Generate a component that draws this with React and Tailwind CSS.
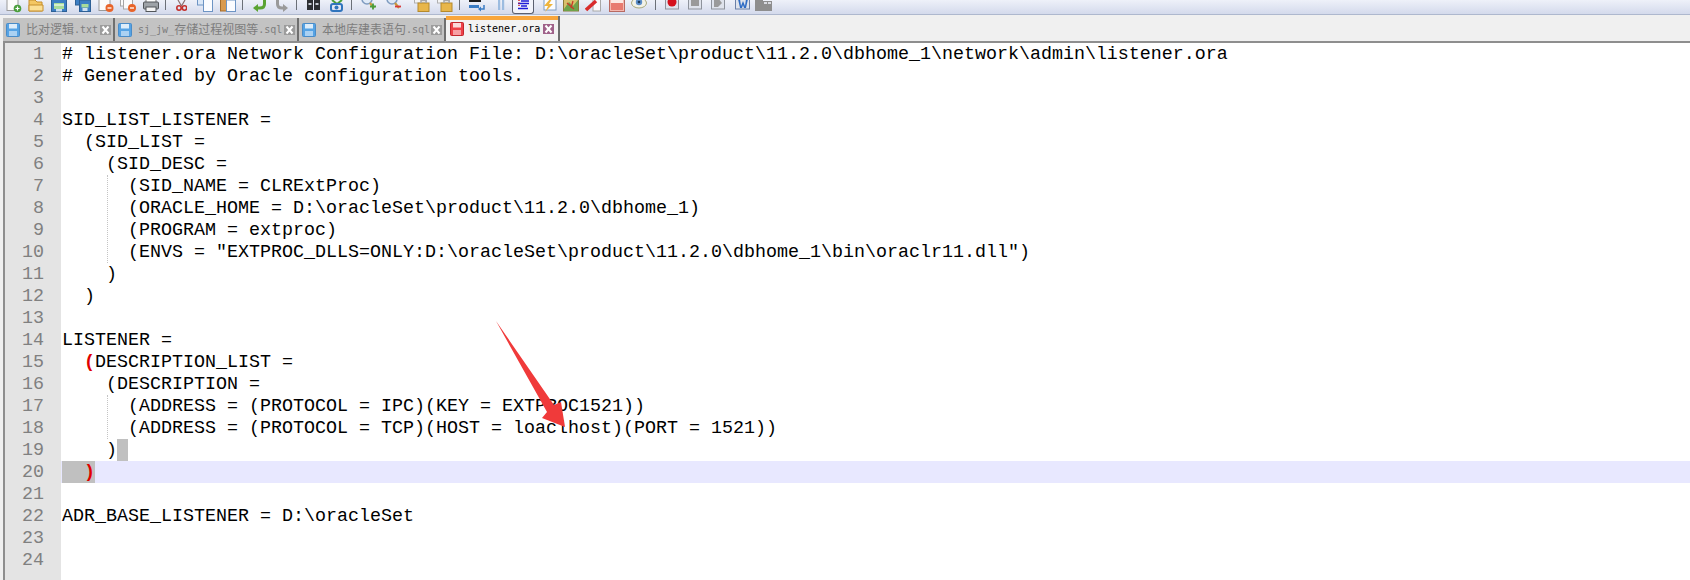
const lines = [
  '# listener.ora Network Configuration File: D:\\oracleSet\\product\\11.2.0\\dbhome_1\\network\\admin\\listener.ora',
  '# Generated by Oracle configuration tools.',
  '',
  'SID_LIST_LISTENER =',
  '  (SID_LIST =',
  '    (SID_DESC =',
  '      (SID_NAME = CLRExtProc)',
  '      (ORACLE_HOME = D:\\oracleSet\\product\\11.2.0\\dbhome_1)',
  '      (PROGRAM = extproc)',
  '      (ENVS = "EXTPROC_DLLS=ONLY:D:\\oracleSet\\product\\11.2.0\\dbhome_1\\bin\\oraclr11.dll")',
  '    )',
  '  )',
  '',
  'LISTENER =',
  null,
  '    (DESCRIPTION =',
  '      (ADDRESS = (PROTOCOL = IPC)(KEY = EXTPROC1521))',
  '      (ADDRESS = (PROTOCOL = TCP)(HOST = loaclhost)(PORT = 1521))',
  null,
  null,
  '',
  'ADR_BASE_LISTENER = D:\\oracleSet',
  '',
  '',
]

// toolbar icons are cut off by the top of the picture, so the viewBox starts at y=3
function Ico({ children, w = 16 }) {
  return (
    <svg width={w} height="13" viewBox={`0 3 ${w} 13`} className="shrink-0">
      {children}
    </svg>
  )
}

function Sep({ className = '' }) {
  return <div className={`h-[10px] w-px shrink-0 self-start bg-[#6b7078] ${className}`} />
}

function Doc({ x = 1 }) {
  return <rect x={x} y="0" width="11" height="13.5" fill="#fbfbfb" stroke="#9a9a9a" />
}

function Toolbar() {
  return (
    <div className="flex h-[15px] items-start border-b border-[#aeb8ce] bg-[#dfe4f2] bg-gradient-to-b from-[#eef1f9] to-[#d4daec] pl-[6px]">
      <div className="flex w-[22px] shrink-0">
        <Ico>
          <Doc />
          <circle cx="11.5" cy="11.5" r="3.8" fill="#4a9e3c" />
          <path d="M9.5 11.5h4M11.5 9.5v4" stroke="#fff" strokeWidth="1.2" />
        </Ico>
      </div>
      <div className="flex w-[23px] shrink-0">
        <Ico>
          <path d="M1 3h6l2 2h5v9H1z" fill="#f4c763" stroke="#c68f2e" />
          <path d="M1 8h14v6H1z" fill="#fbdf95" stroke="#c68f2e" />
        </Ico>
      </div>
      <div className="flex w-[24px] shrink-0">
        <Ico>
          <rect x="0.5" y="0" width="15" height="14.5" fill="#3c7fc4" stroke="#2d6096" />
          <rect x="3" y="6" width="10" height="6" fill="#a8dc9a" />
          <rect x="3" y="7.5" width="10" height="1" fill="#fff" />
          <rect x="5" y="12" width="6" height="2.5" fill="#cfe0f2" />
        </Ico>
      </div>
      <div className="flex w-[23px] shrink-0">
        <Ico>
          <rect x="0.5" y="0" width="10" height="8" fill="#3c7fc4" stroke="#2d6096" />
          <rect x="4.5" y="3" width="11" height="11.5" fill="#3c7fc4" stroke="#2d6096" />
          <rect x="6.5" y="7" width="7" height="3.5" fill="#a8dc9a" />
          <rect x="7.5" y="11" width="5" height="3" fill="#cfe0f2" />
        </Ico>
      </div>
      <div className="flex w-[22px] shrink-0">
        <Ico>
          <Doc />
          <circle cx="11.5" cy="11" r="4" fill="#e8642a" />
          <path d="M9.5 11h4" stroke="#fff" strokeWidth="1.3" />
        </Ico>
      </div>
      <div className="flex w-[23px] shrink-0">
        <Ico w={17}>
          <rect x="0.5" y="0" width="6" height="9" fill="#fbfbfb" stroke="#a6a6a6" />
          <rect x="3.5" y="2" width="9" height="10" fill="#fbfbfb" stroke="#a6a6a6" />
          <circle cx="12" cy="11" r="4" fill="#e8642a" />
          <path d="M10 11h4" stroke="#fff" strokeWidth="1.3" />
        </Ico>
      </div>
      <div className="flex w-[22px] shrink-0">
        <Ico>
          <rect x="3" y="0" width="10" height="6" fill="#fff" stroke="#777" />
          <rect x="0.5" y="5" width="15" height="7" rx="1" fill="#9ea3a8" stroke="#52565a" />
          <rect x="3" y="10" width="10" height="4.5" fill="#f5f5f5" stroke="#52565a" />
        </Ico>
      </div>
      <Sep className="mr-[10px]" />
      <div className="flex w-[21px] shrink-0">
        <Ico w={11}>
          <path d="M2 3l3.5 6M9 3L5.5 9" stroke="#8a6f6f" strokeWidth="1.2" />
          <circle cx="3" cy="11" r="2.2" fill="none" stroke="#c4302c" strokeWidth="1.6" />
          <circle cx="8.5" cy="11" r="2.2" fill="none" stroke="#c4302c" strokeWidth="1.6" />
        </Ico>
      </div>
      <div className="flex w-[23px] shrink-0">
        <Ico>
          <rect x="0.5" y="0" width="8" height="8" fill="#dbe8f8" stroke="#6d94c4" />
          <rect x="6.5" y="2" width="9" height="12.5" fill="#fbfcff" stroke="#6d94c4" />
        </Ico>
      </div>
      <div className="flex w-[22px] shrink-0">
        <Ico>
          <rect x="0.5" y="0" width="9" height="14" fill="#d99a4e" stroke="#a56d2a" />
          <rect x="6.5" y="3" width="9" height="11.5" fill="#fbfcff" stroke="#6d94c4" />
        </Ico>
      </div>
      <Sep className="mr-[9px]" />
      <div className="flex w-[23px] shrink-0">
        <Ico w={15}>
          <path d="M12.5 3v4c0 3-2 4-4.5 4H4" fill="none" stroke="#5aa332" strokeWidth="3" />
          <path d="M6 7l-5 4 5 4z" fill="#5aa332" />
        </Ico>
      </div>
      <div className="flex w-[21px] shrink-0">
        <Ico w={14}>
          <path d="M2.5 3v4c0 3 2 4 4.500 4h2" fill="none" stroke="#9a9a9a" strokeWidth="3" />
          <path d="M8 7l5 4-5 4z" fill="#9a9a9a" />
        </Ico>
      </div>
      <Sep className="mr-[9px]" />
      <div className="flex w-[22px] shrink-0">
        <Ico w={15}>
          <rect x="1" y="3" width="6" height="10" fill="#2d2f33" />
          <rect x="8" y="3" width="6" height="10" fill="#2d2f33" />
          <rect x="2.5" y="6" width="3" height="2" fill="#c9ced6" />
          <rect x="9.5" y="6" width="3" height="2" fill="#c9ced6" />
        </Ico>
      </div>
      <div className="flex w-[23px] shrink-0">
        <Ico w={17}>
          <path d="M4 3l5 4 5-4" fill="none" stroke="#4a9e3c" strokeWidth="2" />
          <rect x="3" y="7" width="11" height="7" rx="2" fill="none" stroke="#2f74bd" strokeWidth="2" />
          <circle cx="8.5" cy="10.5" r="2" fill="#2f74bd" />
        </Ico>
      </div>
      <Sep className="mr-[9px]" />
      <div className="flex w-[25px] shrink-0">
        <Ico>
          <circle cx="6" cy="2" r="5" fill="#dfeaf7" stroke="#7f9cc0" strokeWidth="1.5" />
          <path d="M9 6l4 5" stroke="#c89a3a" strokeWidth="2.2" />
          <path d="M9 9.5h6M12 6.5v6" stroke="#4a9e3c" strokeWidth="1.8" />
        </Ico>
      </div>
      <div className="flex w-[28px] shrink-0">
        <Ico>
          <circle cx="6" cy="2" r="5" fill="#dfeaf7" stroke="#7f9cc0" strokeWidth="1.5" />
          <path d="M9 6l4 5" stroke="#c89a3a" strokeWidth="2.2" />
          <path d="M9 9.5h6" stroke="#d83a3a" strokeWidth="1.8" />
        </Ico>
      </div>
      <div className="flex w-[23px] shrink-0">
        <Ico w={17}>
          <rect x="0.5" y="0" width="12" height="6" fill="#f4f4f4" stroke="#b0b0b0" />
          <rect x="4" y="6" width="11" height="8.5" fill="#e8b64a" stroke="#b58a2c" />
          <path d="M7 6V3.5h5V6" fill="none" stroke="#a8a8a8" strokeWidth="1.5" />
        </Ico>
      </div>
      <div className="flex w-[22px] shrink-0">
        <Ico w={17}>
          <rect x="0.5" y="0" width="12" height="6" fill="#f4f4f4" stroke="#b0b0b0" />
          <rect x="4" y="6" width="11" height="8.5" fill="#e8b64a" stroke="#b58a2c" />
          <path d="M7 6V3.5h5V6" fill="none" stroke="#a8a8a8" strokeWidth="1.5" />
        </Ico>
      </div>
      <Sep className="mr-[9px]" />
      <div className="flex w-[28px] shrink-0">
        <Ico>
          <rect x="0" y="3" width="12" height="2" fill="#1c1c1c" />
          <rect x="0" y="8" width="10" height="3" fill="#3a7cc4" />
          <path d="M15 8v4h-5" fill="none" stroke="#3a7cc4" strokeWidth="1.5" />
          <path d="M12 9.5v5l-3-2.5z" fill="#3a7cc4" />
        </Ico>
      </div>
      <div className="flex w-[15px] shrink-0">
        <Ico w={8}>
          <rect x="1" y="3" width="2.2" height="10" fill="#9cbce0" />
          <rect x="5" y="3" width="2.2" height="10" fill="#9cbce0" />
        </Ico>
      </div>
      <div className="flex h-[14px] w-[22px] shrink-0 justify-center rounded-b-[3px] border-x border-b border-[#5b6070] bg-[#f2f4fb]">
        <Ico w={16}>
          <path d="M6 4h8M3 6.5h11M6 9h6M3 11.5h10" stroke="#1c1cd8" strokeWidth="1.3" />
          <path d="M4 3v7" stroke="#d82020" strokeWidth="1.5" strokeDasharray="1 1.5" />
        </Ico>
      </div>
      <div className="ml-[7px] flex w-[22px] shrink-0">
        <Ico>
          <rect x="3" y="2" width="12" height="11" fill="#fbfcff" stroke="#7f9cc0" />
          <path d="M9 2L3 9h4l-3 6 8-8H8l3-5z" fill="#efb53c" />
        </Ico>
      </div>
      <div className="flex w-[22px] shrink-0">
        <Ico>
          <rect x="0.5" y="1" width="15" height="13" fill="#d8c06a" stroke="#8a7a3a" />
          <path d="M1 12l5-7 4 4 5-6v11H1z" fill="#6fa34a" />
          <path d="M4 6l7 6M10 4l-2 7" stroke="#c83a2a" strokeWidth="1.3" />
        </Ico>
      </div>
      <div className="flex w-[24px] shrink-0">
        <Ico>
          <rect x="8" y="2" width="7.5" height="12" fill="#fbfbfb" stroke="#a8a8a8" />
          <path d="M1 13L11 4" stroke="#d82c2c" strokeWidth="3.5" />
        </Ico>
      </div>
      <div className="flex w-[22px] shrink-0">
        <Ico>
          <rect x="0.5" y="0" width="15" height="14.5" fill="#f4b8b0" stroke="#b86a62" />
          <rect x="2" y="0" width="12" height="6" fill="#fbe8e4" />
          <rect x="2" y="6" width="12" height="7" fill="#e87a70" />
        </Ico>
      </div>
      <div className="flex w-[24px] shrink-0">
        <Ico>
          <ellipse cx="8" cy="6" rx="7.5" ry="5" fill="#f2f2e8" stroke="#a8a87a" />
          <circle cx="8" cy="5" r="3.2" fill="#5c8ec8" />
          <circle cx="8" cy="5" r="1.3" fill="#1e3a5a" />
        </Ico>
      </div>
      <Sep className="mr-[9px]" />
      <div className="flex w-[23px] shrink-0">
        <Ico w={14}>
          <rect x="0.5" y="0" width="13" height="12" fill="#dfe3ec" stroke="#8e939c" />
          <circle cx="7" cy="5" r="4.5" fill="#d4101c" />
        </Ico>
      </div>
      <div className="flex w-[23px] shrink-0">
        <Ico w={14}>
          <rect x="0.5" y="0" width="13" height="12" fill="#dfe3ec" stroke="#8e939c" />
          <rect x="3" y="2" width="8" height="7" fill="#9a9a9a" />
        </Ico>
      </div>
      <div className="flex w-[24px] shrink-0">
        <Ico w={14}>
          <rect x="0.5" y="0" width="13" height="12" fill="#dfe3ec" stroke="#8e939c" />
          <path d="M3 1h4l4 5-4 4H3z" fill="#9a9a9a" />
        </Ico>
      </div>
      <div className="flex w-[20px] shrink-0">
        <Ico w={15}>
          <rect x="0.5" y="0" width="14" height="12" fill="#dfe3ec" stroke="#6b80a8" />
          <path d="M3 2h2l1 7 2-5 2 5 1-7h2l-2 9H9L8 8l-1 3H5z" fill="#2f6cc4" />
        </Ico>
      </div>
      <Ico w={17}>
        <rect x="0" y="4" width="17" height="10" fill="#8e8e8e" />
        <rect x="0" y="3" width="8" height="5" fill="#8e8e8e" />
        <rect x="9" y="5" width="3" height="2" fill="#d8dae0" />
        <rect x="13" y="5" width="3" height="2" fill="#d8dae0" />
      </Ico>
    </div>
  )
}

function SaveIcon({ color = '#5aa7e6', edge = '#3a7cc4' }) {
  return (
    <svg width="14" height="14" viewBox="0 0 14 14" className="shrink-0">
      <rect x="0.5" y="0.5" width="13" height="13" rx="1" fill={color} stroke={edge} />
      <rect x="3" y="1" width="8" height="4.5" fill="#fff" opacity="0.8" />
      <rect x="3" y="8" width="8" height="5" fill="#fff" opacity="0.5" />
    </svg>
  )
}

function CloseBox({ bg }) {
  return (
    <svg width="11" height="10" viewBox="0 0 11 10" className={`shrink-0 ${bg}`}>
      <path d="M2.5 1.5l6 7M8.5 1.5l-6 7" stroke="#fff" strokeWidth="2" />
    </svg>
  )
}

function Tab({ cjk, name, ext, className }) {
  return (
    <div className={`flex h-[23px] items-center border-r-2 border-[#6f6f6f] bg-[#c3c3c3] pl-[3px] text-[#7d7d7d] ${className}`}>
      <SaveIcon color="#56a3e4" edge="#4a8cc8" />
      <div className="ml-[6px] flex flex-1 items-center">
        {name && <span className="text-[10px]">{name}</span>}
        <span className="text-[12px]">{cjk}</span>
        <span className="text-[10px]">{ext}</span>
      </div>
      <CloseBox bg="bg-[#9c9c9c]" />
      <div className="w-[2px]" />
    </div>
  )
}

function Row({ i, children }) {
  return (
    <div className={`h-[22px] whitespace-pre pl-[1px] leading-[24px] ${i === 19 ? 'bg-[#e8e8ff]' : ''}`}>
      {children}
    </div>
  )
}

function Guide({ top, rows }) {
  return (
    <div className={`absolute left-[46px] w-0 border-l border-dotted border-[#c4c4c4] ${top} ${rows}`} />
  )
}

export default function App() {
  return (
    <div className="relative h-[580px] w-[1690px] overflow-hidden bg-[#f0f0f0] font-['Liberation_Mono','Noto_Sans_CJK_SC',monospace]">
      <Toolbar />

      {/* Tabs */}
      <div className="flex h-[26px] items-end pl-[3px] font-['DejaVu_Sans_Mono','Noto_Sans_CJK_SC',monospace]">
        <Tab className="w-[112px]" cjk="比对逻辑" ext=".txt" />
        <Tab className="w-[184px]" name="sj_jw_" cjk="存储过程视图等" ext=".sql" />
        <Tab className="w-[147px]" cjk="本地库建表语句" ext=".sql" />
        <div className="flex h-[25px] w-[114px] flex-col border-r-2 border-[#6f6f6f] bg-[#f3f3f3]">
          <div className="h-[4px] bg-[#f9a63c]" />
          <div className="flex items-center pl-[4px] pt-[1px]">
            <SaveIcon color="#ee4148" edge="#c0282e" />
            <span className="ml-[4px] flex-1 text-[10px] text-black">listener.ora</span>
            <CloseBox bg="bg-[#a0628a]" />
            <div className="w-[4px]" />
          </div>
        </div>
      </div>

      {/* Editor */}
      <div className="ml-[3px] flex h-[539px] border-t-2 border-l-2 border-[#8e8e8e]">
        <div className="w-[56px] bg-[#e4e4e4] text-right text-[18.33px] leading-[24px] text-[#808080]">
          {lines.map((_, i) => (
            <div key={i} className="h-[22px] pr-[17px]">{i + 1}</div>
          ))}
        </div>
        <div className="relative flex-1 bg-white text-[18.33px] text-black">
          <Guide top="top-[132px]" rows="h-[88px]" />
          <Guide top="top-[352px]" rows="h-[44px]" />
          {lines.map((line, i) => {
            if (i === 14) {
              return (
                <Row key={i} i={i}>
                  {'  '}<span className="font-bold text-[#e00000]">(</span>DESCRIPTION_LIST =
                </Row>
              )
            }
            if (i === 18) {
              return (
                <Row key={i} i={i}>
                  {'    )'}<span className="inline-block h-[22px] w-[11px] bg-[#c0c0c0] align-top" />
                </Row>
              )
            }
            if (i === 19) {
              return (
                <Row key={i} i={i}>
                  <span className="inline-block h-[22px] bg-[#c0c0c0] align-top">
                    {'  '}<span className="font-bold text-[#e00000]">)</span>
                  </span>
                </Row>
              )
            }
            return <Row key={i} i={i}>{line}</Row>
          })}
        </div>
      </div>

      {/* Red annotation arrow drawn over the editor */}
      <svg className="absolute left-[490px] top-[315px]" width="80" height="115" viewBox="0 0 80 115">
        <path d="M6 6L64 90L71 87L75 112L52 103L57 97Z" fill="#f03a3a" />
      </svg>
    </div>
  )
}
